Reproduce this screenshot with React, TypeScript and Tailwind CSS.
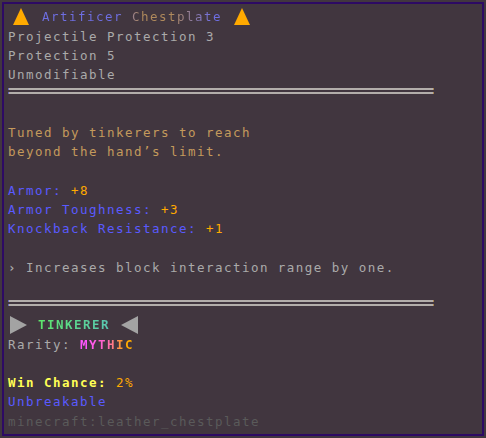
import React from "react";

const Line = ({ children, className = "" }: { children?: React.ReactNode; className?: string }) => (
  <div className={`h-[19.25px] leading-[19.25px] whitespace-pre flex items-center ${className}`}>{children}</div>
);

const Sep = () => (
  <div className="h-[19.25px] relative">
    <div className="absolute left-0 top-[3.6px] w-[426px] h-[2px] bg-[#b3aeab] border-l border-l-[#6868b8] border-r border-r-[#a88450]" />
    <div className="absolute left-0 top-[7.6px] w-[426px] h-[2px] bg-[#b3aeab] border-l border-l-[#6868b8] border-r border-r-[#a88450]" />
  </div>
);

const Up = ({ color }: { color: string }) => (
  <svg width="16" height="17" viewBox="0 0 16 17" className="shrink-0">
    <polygon points="8,0 16,17 0,17" fill={color} />
  </svg>
);

const Right = () => (
  <svg width="17" height="18" viewBox="0 0 17 18" className="shrink-0">
    <polygon points="0,0 17,9 0,18" fill="#a3a3a3" />
  </svg>
);
const Left = () => (
  <svg width="17" height="18" viewBox="0 0 17 18" className="shrink-0">
    <polygon points="17,0 0,9 17,18" fill="#a3a3a3" />
  </svg>
);

export default function App() {
  return (
    <div
      className="w-[486px] h-[438px] bg-[#41363f] p-[2px]"
      style={{ fontFamily: '"DejaVu Sans Mono", monospace' }}
    >
      <div className="w-[482px] h-[434px] border-2 border-[#2d0a64] pl-[4px] pt-[3.4px] text-[12.5px] tracking-[1.47px] text-[#aaaaaa]">
        <Line>
          <span className="ml-[5px] mb-[2px] flex"><Up color="#ffaa00" /></span>
          <span
            className="ml-[13px] bg-clip-text text-transparent"
            style={{ backgroundImage: "linear-gradient(90deg,#6e6ee2 0%,#6e6ee2 42%,#b08a5c 55%,#b08a5c 72%,#6e6ee2 95%)" }}
          >
            Artificer Chestplate
          </span>
          <span className="ml-[12px] mb-[2px] flex"><Up color="#ffaa00" /></span>
        </Line>
        <Line>Projectile Protection 3</Line>
        <Line>Protection 5</Line>
        <Line>Unmodifiable</Line>
        <Sep />
        <Line />
        <Line className="text-[#c49a5c]">Tuned by tinkerers to reach</Line>
        <Line className="text-[#c49a5c]">beyond the hand’s limit.</Line>
        <Line />
        <Line>
          <span className="text-[#5a5aff]">Armor: </span>
          <span className="text-[#ffaa00]">+8</span>
        </Line>
        <Line>
          <span className="text-[#5a5aff]">Armor Toughness: </span>
          <span className="text-[#ffaa00]">+3</span>
        </Line>
        <Line>
          <span className="text-[#5a5aff]">Knockback Resistance: </span>
          <span className="text-[#ffaa00]">+1</span>
        </Line>
        <Line />
        <Line><span className="font-bold">›</span> Increases block interaction range by one.</Line>
        <Line />
        <Sep />
        <Line>
          <span className="ml-[2px] flex"><Right /></span>
          <span
            className="ml-[11px] font-bold bg-clip-text text-transparent"
            style={{ backgroundImage: "linear-gradient(90deg,#5ee86a,#5ac6b4)" }}
          >
            TINKERER
          </span>
          <span className="ml-[11px] flex"><Left /></span>
        </Line>
        <Line>
          Rarity:{" "}
          <span
            className="font-bold bg-clip-text text-transparent"
            style={{ backgroundImage: "linear-gradient(90deg,#ff55ff 10%,#ff66c0 50%,#ffaa00 85%)" }}
          >
            MYTHIC
          </span>
        </Line>
        <Line />
        <Line>
          <span className="text-[#ffff55] font-bold">Win Chance: </span>
          <span className="text-[#ffaa00]">2%</span>
        </Line>
        <Line className="text-[#5a5aff]">Unbreakable</Line>
        <Line className="text-[#5a5a5a]">minecraft:leather_chestplate</Line>
      </div>
    </div>
  );
}
